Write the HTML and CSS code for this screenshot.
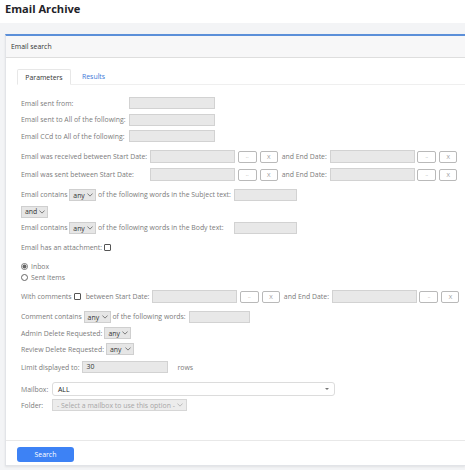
FILE: index.html
```html
<!DOCTYPE html>
<html>
<head>
<meta charset="utf-8">
<link rel="stylesheet" href="styles.css">
</head>
<body>
<div class="topbar"><h1 class="title">Email Archive</h1></div>
<div class="page">
  <div class="card">
    <div class="card-header">Email search</div>
    <div class="card-body">
      <div class="tabs">
        <div class="tab active">Parameters</div>
        <div class="tab link">Results</div>
      </div>
      <div class="form">
        <div class="grid grid-people">
          <span class="lbl">Email sent from:</span><span class="inp w86"></span>
          <span class="lbl">Email sent to All of the following:</span><span class="inp w86"></span>
          <span class="lbl">Email CCd to All of the following:</span><span class="inp w86"></span>
        </div>

        <div class="grid grid-dates">
          <span class="lbl">Email was received between Start Date:</span>
          <span class="daterow">
            <span class="inp date"></span><span class="btn">..</span><span class="btn x">X</span>
            <span class="lbl and">and End Date:</span>
            <span class="inp date"></span><span class="btn">..</span><span class="btn x">X</span>
          </span>
          <span class="lbl">Email was sent between Start Date:</span>
          <span class="daterow">
            <span class="inp date"></span><span class="btn">..</span><span class="btn x">X</span>
            <span class="lbl and">and End Date:</span>
            <span class="inp date"></span><span class="btn">..</span><span class="btn x">X</span>
          </span>
        </div>

        <div class="grid grid-words">
          <span class="lbl">Email contains <span class="sel">any<svg class="chev" viewBox="0 0 8 5"><path d="M0.5 0.5 L4 4 L7.5 0.5"/></svg></span> of the following words in the Subject text:</span>
          <span class="inp w63"></span>
          <span class="span2"><span class="sel">and<svg class="chev" viewBox="0 0 8 5"><path d="M0.5 0.5 L4 4 L7.5 0.5"/></svg></span></span>
          <span class="lbl">Email contains <span class="sel">any<svg class="chev" viewBox="0 0 8 5"><path d="M0.5 0.5 L4 4 L7.5 0.5"/></svg></span> of the following words in the Body text:</span>
          <span class="inp w63"></span>
        </div>

        <div class="line attach"><span class="lbl">Email has an attachment:</span><span class="check"></span></div>

        <div class="radios">
          <div class="line radio-line"><span class="radio checked"></span><span class="lbl">Inbox</span></div>
          <div class="line radio-line"><span class="radio"></span><span class="lbl">Sent Items</span></div>
        </div>

        <div class="line comments">
          <span class="lbl">With comments</span><span class="check"></span>
          <span class="lbl between">between Start Date:</span>
          <span class="daterow">
            <span class="inp date"></span><span class="btn">..</span><span class="btn x">X</span>
            <span class="lbl and">and End Date:</span>
            <span class="inp date"></span><span class="btn">..</span><span class="btn x">X</span>
          </span>
        </div>

        <div class="line contains"><span class="lbl">Comment contains <span class="sel">any<svg class="chev" viewBox="0 0 8 5"><path d="M0.5 0.5 L4 4 L7.5 0.5"/></svg></span> of the following words:</span><span class="inp w61"></span></div>
        <div class="line admin"><span class="lbl">Admin Delete Requested:</span><span class="sel">any<svg class="chev" viewBox="0 0 8 5"><path d="M0.5 0.5 L4 4 L7.5 0.5"/></svg></span></div>
        <div class="line review"><span class="lbl">Review Delete Requested:</span><span class="sel">any<svg class="chev" viewBox="0 0 8 5"><path d="M0.5 0.5 L4 4 L7.5 0.5"/></svg></span></div>
        <div class="line limit"><span class="lbl">Limit displayed to:</span><span class="inp w86 val">30</span><span class="lbl rows">rows</span></div>

        <div class="grid grid-mailbox">
          <span class="lbl">Mailbox:</span>
          <span class="mailbox">ALL<svg class="caret" viewBox="0 0 6 3"><path d="M0 0 L6 0 L3 3 Z"/></svg></span>
          <span class="lbl">Folder:</span>
          <span class="folder">- Select a mailbox to use this option -<svg class="chev light" viewBox="0 0 8 5"><path d="M0.5 0.5 L4 4 L7.5 0.5"/></svg></span>
        </div>
      </div>
    </div>
    <div class="card-footer"><span class="search">Search</span></div>
  </div>
</div>
</body>
</html>
```

FILE: styles.css
```css
* { box-sizing: border-box; }
html, body { margin: 0; padding: 0; }
body {
  font-family: "Open Sans", "Noto Sans", sans-serif;
  font-size: 6.9px;
  color: #7b7b7b;
  background: #f3f4f6;
  width: 465px;
  height: 470px;
  overflow: hidden;
}
.topbar {
  background: #fff;
  height: 23px;
  padding: 1px 0 0 5px;
}
.title {
  margin: 0;
  font-size: 11.1px;
  font-weight: 700;
  color: #1f2329;
  line-height: 16px;
}
.page {
  padding: 11px 0 0 5px;
}
.card {
  background: #fff;
  border-top: 2px solid #5b8fd9;
  border-left: 1px solid #e2e4e8;
  border-bottom: 1px solid #e2e4e8;
  height: 432px;
  box-shadow: 0 1px 2px rgba(0,0,0,0.08);
}
.card-header {
  height: 22px;
  background: #f7f7f8;
  border-bottom: 1px solid #dedede;
  color: #333;
  line-height: 21px;
  padding-left: 5px;
}
.card-body {
  padding: 11px 0 0 11px;
  height: 383px;
  border-bottom: 1px solid #e8e8e8;
}
.tabs {
  display: flex;
  border-bottom: 1px solid #efefef;
  height: 16px;
}
.tab {
  height: 16px;
  line-height: 15px;
  padding: 0 10px;
}
.tab.active {
  color: #333;
  background: #fff;
  border: 1px solid #e7e7e7;
  border-bottom-color: #fff;
  border-radius: 2px 2px 0 0;
  width: 54px;
  text-align: center;
  padding: 0;
}
.tab.link { color: #3b78d8; padding-left: 11px; }

.form {
  padding: 12px 0 0 4px;
}
.lbl { white-space: nowrap; }
.grid {
  display: grid;
  align-items: center;
  justify-content: start;
}
.grid-people {
  grid-template-columns: auto auto;
  grid-auto-rows: 12px;
  row-gap: 4.5px;
  column-gap: 3px;
}
.grid-dates {
  margin-top: 8px;
  grid-template-columns: auto auto;
  grid-auto-rows: 13px;
  row-gap: 5px;
  column-gap: 3px;
}
.grid-words {
  margin-top: 8px;
  grid-template-columns: auto auto;
  grid-auto-rows: 12px;
  row-gap: 4.5px;
  column-gap: 3px;
}
.span2 { grid-column: 1 / 3; }

.inp {
  display: inline-block;
  height: 12px;
  background: #e8e8e8;
  border: 1px solid #d2d2d2;
}
.w86 { width: 86px; }
.w63 { width: 63px; }
.w61 { width: 61px; }
.date { width: 85px; height: 13px; }
.daterow {
  display: flex;
  align-items: center;
}
.btn {
  display: inline-flex;
  align-items: center;
  justify-content: center;
  width: 19px;
  height: 12px;
  margin-left: 2.5px;
  border: 1px solid #b9b9b9;
  border-radius: 2px;
  background: #fff;
  color: #999;
  font-size: 5px;
  line-height: 1;
}
.btn.x { width: 18px; font-size: 6px; margin-left: 3px; }
.lbl.and { margin: 0 3px 0 4px; }

.sel {
  display: inline-flex;
  align-items: center;
  justify-content: space-between;
  width: 27px;
  height: 12px;
  padding: 0 2px 0 3px;
  background: #e6e6e6;
  border: 1px solid #cfcfcf;
  color: #333;
  vertical-align: middle;
}
.chev {
  width: 6px;
  height: 4px;
  fill: none;
  stroke: #555;
  stroke-width: 1;
}
.chev.light { stroke: #aaa; }

.line {
  display: flex;
  align-items: center;
  height: 12px;
}
.check {
  display: inline-block;
  width: 7px;
  height: 7px;
  border: 1px solid #555;
  border-radius: 1px;
  margin-left: 2px;
  background: #fff;
}
.attach { margin-top: 7px; }
.radios { margin-top: 8px; }
.radio-line { height: 10px; margin-bottom: 1px; }
.radio {
  display: inline-block;
  width: 7px;
  height: 7px;
  border: 1px solid #666;
  border-radius: 50%;
  margin-right: 3px;
  background: #fff;
}
.radio.checked { border-color: #777; background: radial-gradient(circle, #666 0 1.8px, #fff 2.2px); }

.comments { margin-top: 8px; height: 13px; }
.lbl.between { margin: 0 3px 0 5px; }
.contains { margin-top: 8px; }
.contains .inp { margin-left: 3px; }
.admin { margin-top: 4px; }
.admin .sel { margin-left: 2px; }
.review { margin-top: 4px; }
.review .sel { margin-left: 2px; width: 28px; }
.limit { margin-top: 6px; }
.limit .inp { margin-left: 3px; }
.val { color: #333; padding-left: 3px; line-height: 10px; }
.lbl.rows { margin-left: 9px; }

.grid-mailbox {
  margin-top: 9px;
  grid-template-columns: 31px auto;
  row-gap: 3px;
}
.mailbox {
  display: flex;
  align-items: center;
  justify-content: space-between;
  width: 283px;
  height: 14px;
  border: 1px solid #dcdcdc;
  border-radius: 3px;
  background: #fff;
  color: #222;
  padding: 0 5px 0 5px;
}
.caret { width: 4px; height: 2px; fill: #777; }
.folder {
  display: flex;
  align-items: center;
  justify-content: space-between;
  width: 135px;
  height: 12px;
  border: 1px solid #d6d6d6;
  background: #ececec;
  color: #a6a6a6;
  padding: 0 3px 0 4px;
}

.card-footer {
  padding: 6px 0 0 11px;
}
.search {
  display: inline-flex;
  align-items: center;
  justify-content: center;
  width: 57px;
  height: 15px;
  background: #3d82f5;
  border-radius: 3px;
  color: #fff;
}
```
